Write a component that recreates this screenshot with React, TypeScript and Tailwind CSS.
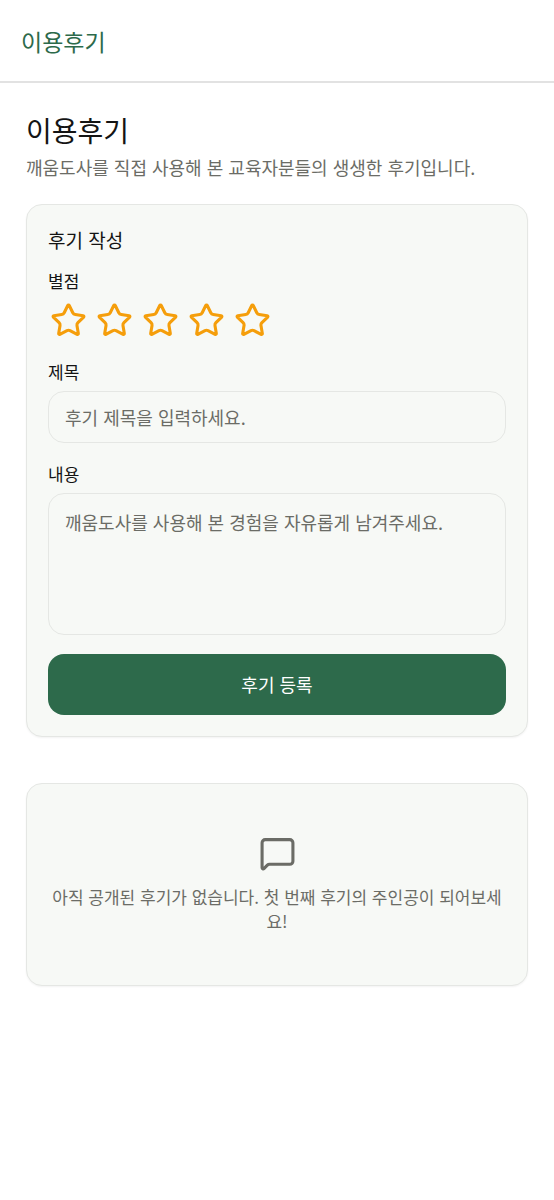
import React, {ReactNode} from "react";
import {MessageSquare, Star} from "lucide-react";

const RATINGS = [1, 2, 3, 4, 5];

interface FieldProps {
  id: string;
  label: string;
  children?: ReactNode;
}

const Field: React.FunctionComponent<FieldProps> = (props) => {
  return (
    <div className="flex flex-col gap-[7px]">
      <label htmlFor={props.id} className="text-[17px] leading-6">{props.label}</label>
      {props.children}
    </div>
  );
};

const StarRating: React.FunctionComponent = () => {
  const [rating, setRating] = React.useState(0);

  return (
    <fieldset className="pb-[2px]">
      <legend className="text-[17px] leading-6">별점</legend>
      <div className="flex gap-[5px] pt-[9px]">
        {RATINGS.map((value) => (
          <button key={value}
                  type="button"
                  className="cursor-pointer px-[2px] text-[#f59e0b]"
                  aria-label={`${value}점`}
                  aria-pressed={value <= rating}
                  onClick={() => setRating(value)}>
            <Star size={37} fill={value <= rating ? "currentColor" : "none"} />
          </button>
        ))}
      </div>
    </fieldset>
  );
};

const ReviewForm: React.FunctionComponent = () => {
  const inputClass = "block w-full rounded-2xl border border-[#e5e7e4] bg-[#f7f9f6] px-4 text-[18px] leading-7 outline-none placeholder:text-[#6b6c66] focus:border-[#2d6a4b]";

  return (
    <form className="rounded-2xl border border-[#e5e7e4] bg-[#f7f9f6] p-[21px] shadow-xs" onSubmit={(e) => e.preventDefault()}>
      <h2 className="text-[19px] leading-7">후기 작성</h2>
      <div className="flex flex-col gap-[19px] pt-[15px]">
        <StarRating />
        <Field id="review-title" label="제목">
          <input id="review-title" type="text" className={`${inputClass} py-[11px]`} placeholder="후기 제목을 입력하세요." />
        </Field>
        <Field id="review-content" label="내용">
          <textarea id="review-content" rows={4} className={`${inputClass} resize-none py-[14px]`} placeholder="깨움도사를 사용해 본 경험을 자유롭게 남겨주세요." />
        </Field>
        <button type="submit" className="w-full cursor-pointer rounded-2xl bg-[#2d6a4b] py-4 text-[18px] leading-[29px] text-white">
          후기 등록
        </button>
      </div>
    </form>
  );
};

const EmptyReviews: React.FunctionComponent = () => {
  return (
    <section className="flex flex-col items-center rounded-2xl border border-[#e5e7e4] bg-[#f7f9f6] px-[21px] pt-[51px] pb-[52px] text-center text-[#6b6c66] shadow-xs">
      <MessageSquare size={37} />
      <p className="pt-[13px] text-[17px] leading-6">아직 공개된 후기가 없습니다. 첫 번째 후기의 주인공이 되어보세요!</p>
    </section>
  );
};

const App: React.FunctionComponent = () => {
  return (
    <div lang="ko" className="min-h-screen bg-white font-['Noto_Sans_CJK_KR',sans-serif] text-[#141414]">
      <header className="border-b-2 border-[#e2e2e2] px-[21px] pt-[25px] pb-6">
        <p className="text-[23px] leading-8 text-[#2d6a4b]">이용후기</p>
      </header>
      <main className="px-[26px] py-[29px]">
        <h1 className="text-[28px] leading-9">이용후기</h1>
        <p className="pt-[5px] text-[18px] leading-7 text-[#6b6c66]">깨움도사를 직접 사용해 본 교육자분들의 생생한 후기입니다.</p>
        <div className="flex flex-col gap-[46px] pt-[23px]">
          <ReviewForm />
          <EmptyReviews />
        </div>
      </main>
    </div>
  );
};

export default App;
